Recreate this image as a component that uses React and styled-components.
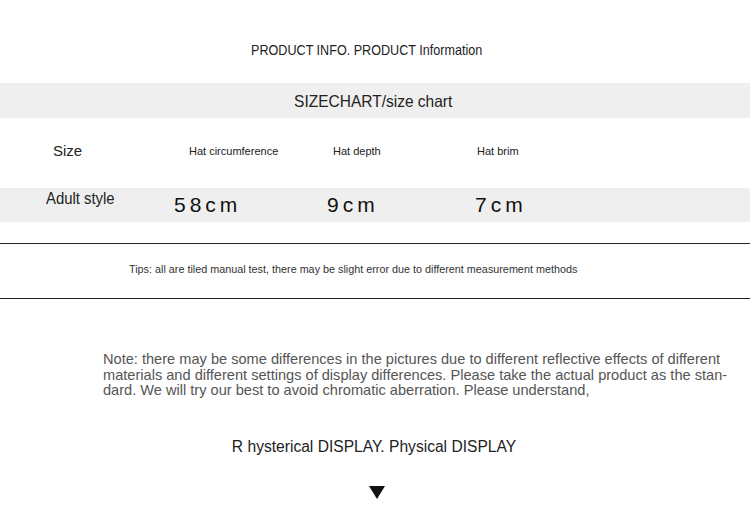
import React from "react";
import styled, { createGlobalStyle } from "styled-components";

const Global = createGlobalStyle`
  html, body {
    margin: 0;
    padding: 0;
    background: #fff;
  }
  body {
    font-family: "Liberation Sans", Arial, sans-serif;
    color: #222;
  }
`;

const Page = styled.div`
  width: 750px;
  display: flex;
  flex-direction: column;
`;

// condensed text: no narrow face is installed, so squeeze Liberation Sans
const Narrow = styled.span`
  display: inline-block;
  white-space: nowrap;
  transform: scaleX(${(p) => p.$sx});
  transform-origin: ${(p) => p.$origin || "center"} center;
`;

const Title = styled.div`
  height: 83px;
  display: flex;
  justify-content: center;
  padding-top: 41px;
  padding-right: 16px;
  box-sizing: border-box;
  font-size: 15px;
  line-height: 18px;
  color: #222;
`;

const Band = styled.div`
  height: 35px;
  padding-top: 1px;
  padding-right: 4px;
  box-sizing: border-box;
  background: #efefef;
  display: flex;
  align-items: center;
  justify-content: center;
  font-size: 16.5px;
  color: #222;
`;

const Row = styled.div`
  display: grid;
  grid-template-columns: ${(p) => p.$cols};
  padding-left: ${(p) => p.$pl}px;
  height: ${(p) => p.$h}px;
  align-items: ${(p) => p.$align};
  background: ${(p) => (p.$grey ? "#efefef" : "transparent")};
`;

const Label = styled.div`
  font-size: ${(p) => p.$size}px;
  color: #222;
  margin-top: ${(p) => p.$mt || 0}px;
`;

const Value = styled.div`
  font-size: 21px;
  letter-spacing: 4px;
  color: #111;
  margin-top: 5px;
`;

const Tips = styled.div`
  margin-top: 21px;
  border-top: 1px solid #222;
  border-bottom: 1px solid #222;
  height: 56px;
  box-sizing: border-box;
  display: flex;
  align-items: center;
  padding-left: 129px;
  padding-bottom: 4px;
  font-size: 10.8px;
  color: #333;
`;

const Note = styled.div`
  margin: 53px 0 0 103px;
  font-size: 14.6px;
  line-height: 15.6px;
  color: #555;
`;

const NoteLine = styled.span`
  display: block;
  white-space: nowrap;
`;

const Display = styled.div`
  margin-top: 39px;
  padding-right: 2px;
  text-align: center;
  font-size: 15.6px;
  color: #222;
`;

const Arrow = styled.div`
  margin-top: 30px;
  display: flex;
  justify-content: center;
  padding-left: 4px;
`;

const noteLines = [
  "Note: there may be some differences in the pictures due to different reflective effects of different",
  "materials and different settings of display differences. Please take the actual product as the stan-",
  "dard. We will try our best to avoid chromatic aberration. Please understand,",
];

export default function App() {
  return (
    <Page>
      <Global />
      <Title>
        <Narrow $sx={0.84}>PRODUCT INFO. PRODUCT Information</Narrow>
      </Title>
      <Band>
        <Narrow $sx={0.94}>SIZECHART/size chart</Narrow>
      </Band>
      <Row $h={70} $pl={53} $cols="136px 144px 144px 1fr" $align="center">
        <Label $size={15} $mt={-6}>Size</Label>
        <Label $size={11} $mt={-4}>Hat circumference</Label>
        <Label $size={11} $mt={-4}>Hat depth</Label>
        <Label $size={11} $mt={-4}>Hat brim</Label>
      </Row>
      <Row $h={34} $pl={46} $cols="128px 153px 148px 1fr" $align="start" $grey>
        <Label $size={16} $mt={2}>
          <Narrow $sx={0.93} $origin="left">Adult style</Narrow>
        </Label>
        <Value>58cm</Value>
        <Value>9cm</Value>
        <Value>7cm</Value>
      </Row>
      <Tips>Tips: all are tiled manual test, there may be slight error due to different measurement methods</Tips>
      <Note>
        {noteLines.map((line) => (
          <NoteLine key={line}>{line}</NoteLine>
        ))}
      </Note>
      <Display>R hysterical DISPLAY. Physical DISPLAY</Display>
      <Arrow>
        <svg width="16" height="13" viewBox="0 0 16 13">
          <path d="M0 0 H16 L8 13 Z" fill="#111" />
        </svg>
      </Arrow>
    </Page>
  );
}
